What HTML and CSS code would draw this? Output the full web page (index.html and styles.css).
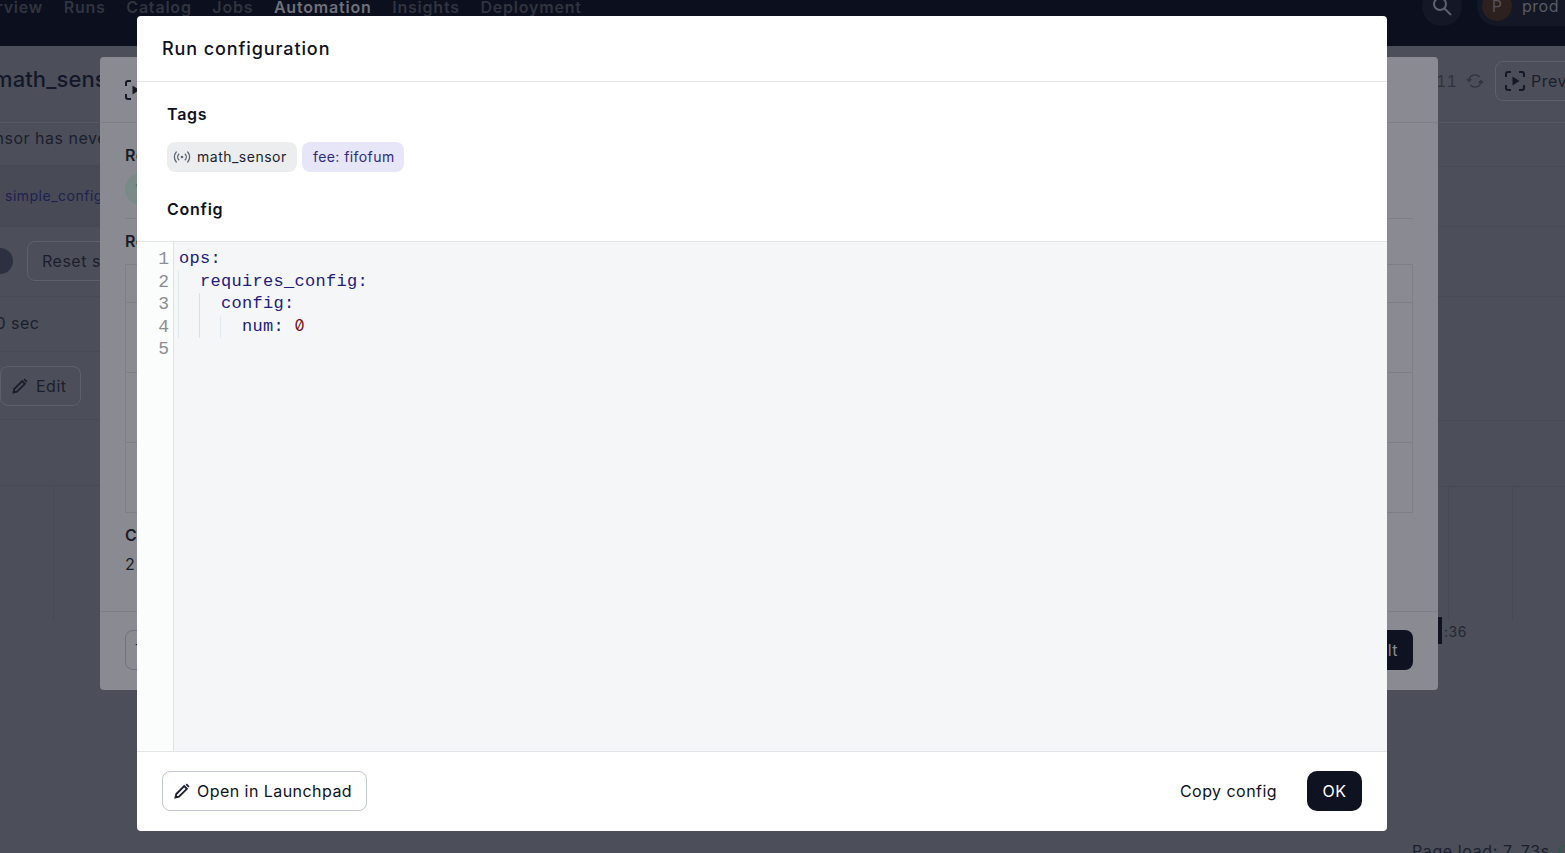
FILE: index.html
```html
<!DOCTYPE html>
<html lang="en">
<head>
<meta charset="utf-8">
<title>Run configuration</title>
<link rel="stylesheet" href="styles.css">
</head>
<body>
<div class="page">
  <header class="nav">
    <nav class="nav-links">
      <span>Overview</span><span>Runs</span><span>Catalog</span><span>Jobs</span><span class="active">Automation</span><span>Insights</span><span>Deployment</span>
    </nav>
    <div class="nav-right">
      <span class="search-pill">
        <svg width="20" height="20" viewBox="0 0 20 20" fill="none" stroke="#5f616c" stroke-width="2"><circle cx="8" cy="8" r="6"/><path d="M12.500 12.500 19 19"/></svg>
      </span>
      <span class="workspace"><span class="avatar">P</span><span>prod</span></span>
    </div>
  </header>

  <main class="back">
    <section class="back-left">
      <h1 class="back-title">math_sensor</h1>
      <div class="back-row r-desc"><span class="shift-a">Sensor has never run</span></div>
      <div class="back-row r-job"><span class="shift-b">simple_config_job</span></div>
      <div class="back-row r-reset"><span class="toggle"></span><span class="outline reset">Reset sensor</span></div>
      <div class="back-row r-freq"><span class="shift-c">30 sec</span></div>
      <div class="back-row r-edit">
        <span class="outline edit">
          <svg width="16" height="16" viewBox="0 0 16 16" fill="none" stroke="#1b1e2c" stroke-width="1.900"><path d="M1.500 14.500l.8-3.500L10.200 3.100l2.700 2.700L5 13.700z"/><path d="M11.600 1.700l1.200-1.200 2.700 2.700-1.200 1.200z" fill="#1b1e2c" stroke="none"/></svg>
          Edit
        </span>
      </div>
      <div class="back-row r-chart"><span class="grid-v"></span></div>
    </section>

    <section class="back-right">
      <div class="status-row">
        <span class="stamp">11</span>
        <svg class="refresh" width="18" height="18" viewBox="0 0 18 18" fill="none" stroke="#30333f" stroke-width="1.400"><path d="M3 8a6 6 0 0 1 10.500-3M15 10a6 6 0 0 1-10.500 3"/><path d="M1 7l2 2.400L5.200 7M17 11l-2-2.400L12.800 11"/></svg>
        <span class="outline preview">
          <svg width="20" height="20" viewBox="0 0 20 20" fill="none" stroke="#151826" stroke-width="2"><path d="M1 6V3a2 2 0 0 1 2-2h3M14 1h3a2 2 0 0 1 2 2v3M19 14v3a2 2 0 0 1-2 2h-3M6 19H3a2 2 0 0 1-2-2v-3"/><path d="M7.500 5.500v9l7-4.500z" fill="#151826" stroke="none"/></svg>
          Preview
        </span>
      </div>
      <div class="back-line l1"></div>
      <div class="back-line l2"></div>
      <div class="back-line l3"></div>
      <div class="back-line l4"></div>
      <div class="chart-frame"><span class="bar"></span><span class="tick">:36</span><span class="vert v1"></span><span class="vert v2"></span></div>
    </section>
  </main>

  <div class="page-load">Page load: 7..73s<span class="load-dot"></span></div>

  <div class="dialog-under">
    <div class="under-head">
      <svg class="under-icon" width="20" height="20" viewBox="0 0 20 20" fill="none" stroke="#151826" stroke-width="2"><path d="M1 6V3a2 2 0 0 1 2-2h3M6 19H3a2 2 0 0 1-2-2v-3"/><path d="M7.500 5.500v9l7-4.500z" fill="#151826" stroke="none"/></svg>
    </div>
    <div class="under-body">
      <div class="u-label u-first">Requested</div>
      <div class="u-tag">1</div>
      <div class="u-rule"></div>
      <div class="u-label u-second">Result</div>
      <div class="u-table">
        <div class="u-cell c1"></div>
        <div class="u-cell c2"></div>
        <div class="u-cell c3"></div>
        <div class="u-cell c4"></div>
      </div>
      <div class="u-label u-third">Cursor</div>
      <div class="u-value">2</div>
    </div>
    <div class="under-foot">
      <span class="u-btn">Test</span>
      <span class="u-btn-dark">Default</span>
    </div>
  </div>

  <div class="dialog" role="dialog" aria-label="Run configuration">
    <div class="dialog-head">Run configuration</div>
    <div class="dialog-meta">
      <h2 class="heading">Tags</h2>
      <div class="tags">
        <span class="tag tag-grey">
          <svg width="18" height="14" viewBox="0 0 18 14" fill="none" stroke="#5e6678" stroke-width="1.300" stroke-linecap="round"><circle cx="9" cy="7" r="1.300" fill="#5e6678" stroke="none"/><path d="M5.800 4.200a4 4 0 0 0 0 5.600M12.200 4.200a4 4 0 0 1 0 5.600M3.300 2a7.500 7.500 0 0 0 0 10M14.700 2a7.500 7.500 0 0 1 0 10"/></svg>
          math_sensor
        </span>
        <span class="tag tag-blue">fee: fifofum</span>
      </div>
      <h2 class="heading heading-config">Config</h2>
    </div>
    <div class="editor">
      <div class="gutter">
        <span>1</span><span>2</span><span>3</span><span>4</span><span>5</span>
      </div>
      <div class="code">
        <div class="code-line">ops:</div>
        <div class="code-line indent i1">requires_config:</div>
        <div class="code-line indent i2">config:</div>
        <div class="code-line indent i3">num: <span class="num">0</span></div>
        <div class="code-line">&nbsp;</div>
      </div>
    </div>
    <div class="dialog-foot">
      <button class="btn btn-outline">
        <svg width="16" height="16" viewBox="0 0 16 16" fill="none" stroke="#1b1e2c" stroke-width="1.900"><path d="M1.500 14.500l.8-3.500L10.200 3.100l2.700 2.700L5 13.700z"/><path d="M11.600 1.700l1.200-1.200 2.700 2.700-1.200 1.200z" fill="#1b1e2c" stroke="none"/></svg>
        Open in Launchpad
      </button>
      <div class="foot-right">
        <button class="btn btn-plain">Copy config</button>
        <button class="btn btn-dark">OK</button>
      </div>
    </div>
  </div>
</div>
</body>
</html>
```

FILE: styles.css
```css
* { box-sizing: border-box; }
html, body { margin: 0; padding: 0; height: 100%; }
body {
  font-family: Inter, "Liberation Sans", sans-serif;
  letter-spacing: .5px;
  color: #0f1220;
  background: #4c4f59;
  overflow: hidden;
}
h1, h2 { margin: 0; }

.page {
  position: relative;
  width: 1565px;
  height: 853px;
  overflow: hidden;
  background: #4c4f59;
}

/* top nav, scrolled partly out of view */
.nav {
  height: 46px;
  background: #0b0f1e;
  display: flex;
  justify-content: space-between;
  align-items: flex-start;
  overflow: hidden;
}
.nav-links {
  display: flex;
  gap: 20.600px;
  margin: -3px 0 0 -37px;
  font-size: 16px;
  line-height: 20px;
  font-weight: 600;
  letter-spacing: .8px;
  color: #31343f;
}
.nav-links .active { color: #6f717b; }
.nav-right {
  display: flex;
  align-items: center;
  gap: 15px;
  margin: -14px 0 0 0;
}
.search-pill {
  width: 40px;
  height: 40px;
  border-radius: 50%;
  background: #131726;
  display: flex;
  align-items: center;
  justify-content: center;
}
.workspace {
  display: flex;
  align-items: center;
  gap: 10px;
  height: 40px;
  padding: 0 0 0 5px;
  border-radius: 20px 0 0 20px;
  background: #131726;
  color: #5a5c67;
  font-size: 16px;
  width: 88px;
  overflow: hidden;
  white-space: nowrap;
}
.avatar {
  width: 30px;
  height: 30px;
  border-radius: 50%;
  background: #2c211e;
  display: flex;
  align-items: center;
  justify-content: center;
  flex: none;
  color: #55525a;
}

/* dimmed page behind the dialogs */
.back {
  display: flex;
  justify-content: space-between;
  height: 807px;
  color: #1b1e2c;
  font-size: 16px;
}
.back-left { width: 100px; overflow: hidden; }
.back-title {
  height: 77px;
  padding-top: 19px;
  margin-left: -7px;
  width: 300px;
  font-size: 22px;
  line-height: 28px;
  font-weight: 500;
  letter-spacing: .1px;
  color: #14172a;
  border-bottom: 1px solid #555862;
  white-space: nowrap;
}
.back-row {
  display: flex;
  align-items: center;
  border-bottom: 1px solid #474a54;
  white-space: nowrap;
}
.r-desc { height: 43px; padding-bottom: 12px; }
.shift-a { margin-left: -26px; }
.r-job {
  height: 61px;
  padding-bottom: 2px;
  font-size: 14px;
  color: #1e2050;
  background: #484b56;
}
.shift-b { margin-left: 5px; }
.r-reset { height: 70px; gap: 14px; padding-bottom: 2px; }
.toggle {
  width: 26px;
  height: 26px;
  margin-left: -13px;
  border-radius: 50%;
  background: #2c3040;
  flex: none;
}
.outline {
  display: inline-flex;
  align-items: center;
  height: 40px;
  border: 1px solid #5e616d;
  border-radius: 8px;
  white-space: nowrap;
}
.reset { padding: 0 14px; }
.r-freq { height: 55px; padding-bottom: 2px; }
.shift-c { margin-left: -15px; }
.r-edit { height: 68px; }
.edit { gap: 8px; width: 81px; padding-left: 11px; }
.r-chart {
  position: relative;
  height: 66px;
}
.grid-v {
  position: absolute;
  left: 53px;
  top: 66px;
  width: 1px;
  height: 134px;
  background: #474a54;
}

.back-right { width: 127px; overflow: hidden; position: relative; }
.status-row {
  height: 77px;
  width: 200px;
  display: flex;
  align-items: flex-start;
  gap: 12px;
  padding-top: 15px;
  margin-left: -2px;
  border-bottom: 1px solid #555862;
  white-space: nowrap;
}
.status-row > * { flex: none; }
.stamp {
  color: #31343f;
  font-size: 16px;
  line-height: 40px;
  width: 18px;
  text-align: right;
  font-variant-numeric: tabular-nums;
  letter-spacing: 0;
}
.refresh { margin: 11px -1px 0 0; }
.preview { gap: 6px; padding-left: 9px; width: 110px; }
.back-line { height: 1px; background: #474a54; }
.l1 { margin-top: 43px; }
.l2 { margin-top: 59px; }
.l3 { margin-top: 69px; }
.l4 { margin-top: 123px; }
.chart-frame {
  position: relative;
  margin-top: 65px;
  height: 60px;
  border-top: 1px solid #474a54;
}
.bar {
  position: absolute;
  left: 0;
  top: 130px;
  width: 4px;
  height: 27px;
  background: #0f1220;
}
.tick {
  position: absolute;
  left: 6px;
  top: 136px;
  font-size: 14px;
  color: #242734;
}
.vert { position: absolute; top: 0; width: 1px; height: 134px; background: #474a54; }
.v1 { left: 10px; }
.v2 { left: 74px; }
.page-load {
  position: absolute;
  left: 1412px;
  top: 841px;
  display: flex;
  align-items: center;
  gap: 8px;
  font-size: 16px;
  line-height: 20px;
  letter-spacing: .6px;
  color: #1b1e2c;
  white-space: nowrap;
}
.load-dot {
  width: 12px;
  height: 12px;
  border: 2px solid #2f5a48;
  border-radius: 50%;
  flex: none;
}

/* underlying dialog */
.dialog-under {
  position: absolute;
  left: 100px;
  top: 57px;
  width: 1338px;
  height: 633px;
  background: #8a8b92;
  border-radius: 4px;
  display: flex;
  flex-direction: column;
  color: #191c28;
  font-size: 16px;
}
.under-head {
  height: 66px;
  padding: 23px 0 0 25px;
  border-bottom: 1px solid #7e7f87;
  flex: none;
}
.under-body { flex: 1; padding: 0 25px; }
.u-label { font-weight: 600; line-height: 20px; }
.u-first { margin-top: 22px; }
.u-tag {
  width: 40px;
  height: 32px;
  margin-top: 8px;
  border-radius: 16px;
  background: #7a8a86;
  padding-left: 10px;
  line-height: 32px;
  color: #3c6a58;
}
.u-rule { height: 1px; background: #7e7f87; margin-top: 13px; }
.u-second { margin-top: 12px; }
.u-table {
  height: 249px;
  margin-top: 13px;
  border: 1px solid #7e7f87;
}
.u-cell { border-bottom: 1px solid #7e7f87; }
.c1 { height: 38px; }
.c2 { height: 70px; }
.c3 { height: 70px; }
.c4 { height: 69px; border-bottom: 0; }
.u-third { margin-top: 12px; }
.u-value { margin-top: 9px; line-height: 20px; }
.under-foot {
  height: 79px;
  flex: none;
  border-top: 1px solid #7e7f87;
  display: flex;
  justify-content: space-between;
  align-items: center;
  padding: 0 25px 2px;
}
.u-btn {
  display: flex;
  align-items: center;
  height: 40px;
  padding: 0 15px 0 9px;
  border: 1px solid #70737f;
  border-radius: 8px;
}
.u-btn-dark {
  display: flex;
  align-items: center;
  height: 40px;
  padding: 0 15px;
  border-radius: 8px;
  background: #0f1220;
  color: #8a8b92;
}

/* top dialog */
.dialog {
  position: absolute;
  left: 137px;
  top: 16px;
  width: 1250px;
  height: 815px;
  background: #fff;
  border-radius: 4px;
  display: flex;
  flex-direction: column;
  overflow: hidden;
}
.dialog-head {
  height: 66px;
  flex: none;
  padding-left: 25px;
  padding-bottom: 1px;
  display: flex;
  align-items: center;
  font-size: 18px;
  font-weight: 500;
  letter-spacing: .9px;
  color: #0f1220;
  border-bottom: 1px solid #e8e8ea;
}
.dialog-meta {
  height: 159px;
  flex: none;
  padding: 22px 30px 0;
}
.heading {
  font-size: 16px;
  line-height: 20px;
  font-weight: 600;
  letter-spacing: .75px;
  color: #0f1220;
}
.tags {
  display: flex;
  gap: 5px;
  margin-top: 18px;
}
.tag {
  display: inline-flex;
  align-items: center;
  height: 30px;
  padding-bottom: 1px;
  border-radius: 8px;
  font-size: 14px;
  white-space: nowrap;
}
.tag-grey {
  width: 130px;
  gap: 6px;
  padding-left: 6px;
  background: #ecedee;
  color: #1b1e2c;
}
.tag-blue {
  width: 102px;
  padding-left: 11px;
  letter-spacing: .42px;
  background: #e7e6f8;
  color: #2f2a7e;
}
.heading-config { margin-top: 27px; }

.editor {
  flex: 1;
  min-height: 0;
  display: flex;
  background: #f5f6f8;
  border-top: 1px solid #e4e5e8;
  border-bottom: 1px solid #e4e5e8;
  font-family: "Liberation Mono", monospace;
  font-size: 17px;
  line-height: 22.500px;
  letter-spacing: 0;
}
.gutter {
  width: 37px;
  flex: none;
  padding: 6px 4px 0 0;
  display: flex;
  flex-direction: column;
  align-items: flex-end;
  background: #fbfdfc;
  border-right: 1px solid #e0e1e3;
  color: #8b8d92;
  font-size: 18px;
}
.code {
  flex: 1;
  padding: 6px 0 0 4px;
  color: #23207a;
  letter-spacing: .3px;
}
.code-line { height: 22.500px; white-space: pre; padding-left: 1px; }
.i1 { padding-left: 22px; background: linear-gradient(#dfe9e6, #dfe9e6) 0 0 / 1px 100% no-repeat; }
.i2 {
  padding-left: 43px;
  background:
    linear-gradient(#dfe9e6, #dfe9e6) 0 0 / 1px 100% no-repeat,
    linear-gradient(#dcdff1, #dcdff1) 21px 0 / 1px 100% no-repeat;
}
.i3 {
  padding-left: 64px;
  background:
    linear-gradient(#dfe9e6, #dfe9e6) 0 0 / 1px 100% no-repeat,
    linear-gradient(#dcdff1, #dcdff1) 21px 0 / 1px 100% no-repeat,
    linear-gradient(#e1e9f0, #e1e9f0) 42px 0 / 1px 100% no-repeat;
}
.num {
  color: #7a1212;
  font-family: Inter, sans-serif;
  font-size: 16px;
  line-height: 0;
  font-variant-numeric: slashed-zero;
  font-feature-settings: "zero" 1;
}

.dialog-foot {
  height: 79px;
  flex: none;
  padding: 0 25px 1px;
  display: flex;
  justify-content: space-between;
  align-items: center;
}
.foot-right { display: flex; align-items: center; gap: 30px; }
.btn {
  display: inline-flex;
  align-items: center;
  height: 40px;
  border-radius: 8px;
  font: 400 16px/20px Inter, "Liberation Sans", sans-serif;
  letter-spacing: .45px;
  color: #0f1220;
  border: 0;
  background: none;
  padding: 0;
  white-space: nowrap;
}
.btn-outline {
  width: 205px;
  gap: 7px;
  padding-left: 11px;
  border: 1px solid #c3c7d4;
  background: #fff;
}
.btn-dark {
  width: 55px;
  justify-content: center;
  background: #0f1220;
  color: #fff;
  border-radius: 10px;
}
```
